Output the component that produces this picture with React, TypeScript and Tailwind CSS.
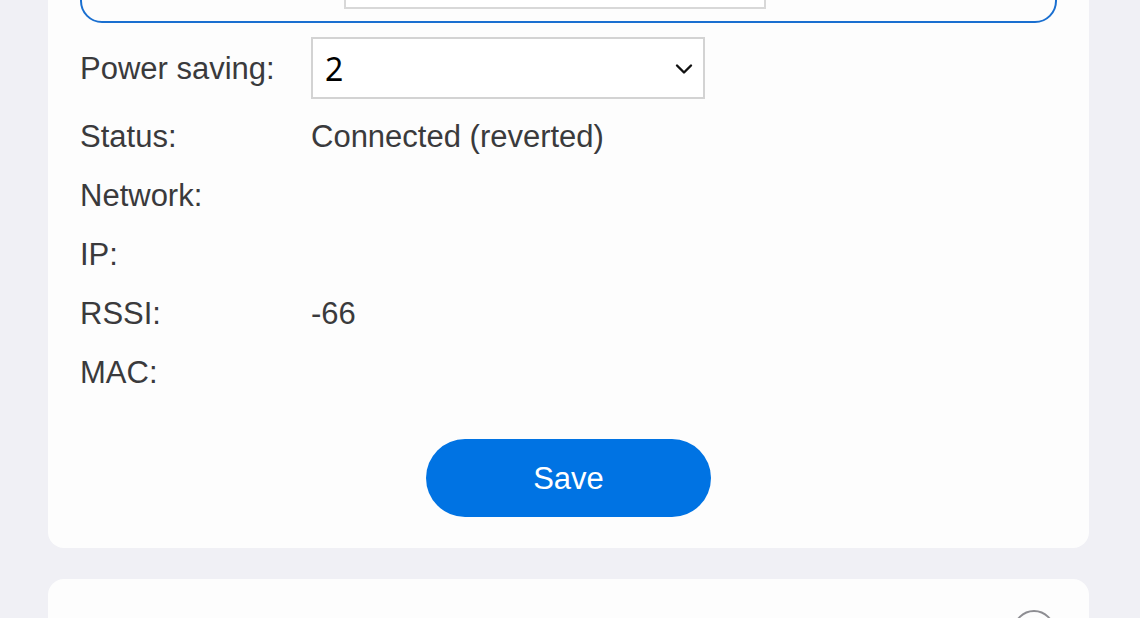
const rows = [
  { label: "Status:", value: "Connected (reverted)" },
  { label: "Network:", value: "" },
  { label: "IP:", value: "" },
  { label: "RSSI:", value: "-66" },
  { label: "MAC:", value: "" },
];

function Chevron() {
  return (
    <svg width="18" height="13" viewBox="0 0 18 13" fill="none">
      <path d="M2 3.5 L9 10.5 L16 3.5" stroke="#111" strokeWidth="2.4" strokeLinecap="round" strokeLinejoin="round" />
    </svg>
  );
}

export default function App() {
  return (
    <div className="h-[618px] overflow-hidden bg-[#f0f0f5] pl-[48px] pr-[51px] font-['Liberation_Sans',Arial,sans-serif]">
      <div className="flex flex-col gap-[31px]">
        <div className="-mt-[77px] rounded-[16px] bg-[#fdfdfd] px-[32px] pt-[20px] pb-[31px]">
          <div className="flex h-[80px] items-end rounded-[22px] border-2 border-[#1a6fd0] pb-[12px] pl-[262px]">
            <div className="h-[50px] w-[422px] border-2 border-[#d8d8d8] bg-white" />
          </div>

          <div className="mt-[14px] flex items-center">
            <div className="w-[231px] pt-[3px] text-[31px] text-[#3a3a3c]">Power saving:</div>
            <div className="flex h-[62px] w-[394px] items-center justify-between border-2 border-[#d3d3d3] bg-white pl-[12px] pr-[10px]">
              <span className="pt-[2px] font-['Noto_Sans',sans-serif] text-[32px] text-black">2</span>
              <Chevron />
            </div>
          </div>

          <div className="mt-[7px] flex flex-col">
            {rows.map((r) => (
              <div key={r.label} className="flex h-[59px] items-center pt-[3px] text-[31px] text-[#3a3a3c]">
                <div className="w-[231px]">{r.label}</div>
                <div>{r.value}</div>
              </div>
            ))}
          </div>

          <div className="mt-[38px] flex justify-center">
            <button className="h-[78px] w-[285px] rounded-full bg-[#0073e3] pt-[2px] text-[31px] text-white">
              Save
            </button>
          </div>
        </div>

        <div className="h-[160px] rounded-[16px] bg-[#fdfdfd] pt-[31px] pr-[34px]">
          <div className="flex justify-end">
            <div className="h-[42px] w-[42px] rounded-full border-2 border-[#8e8e93]" />
          </div>
        </div>
      </div>
    </div>
  );
}
